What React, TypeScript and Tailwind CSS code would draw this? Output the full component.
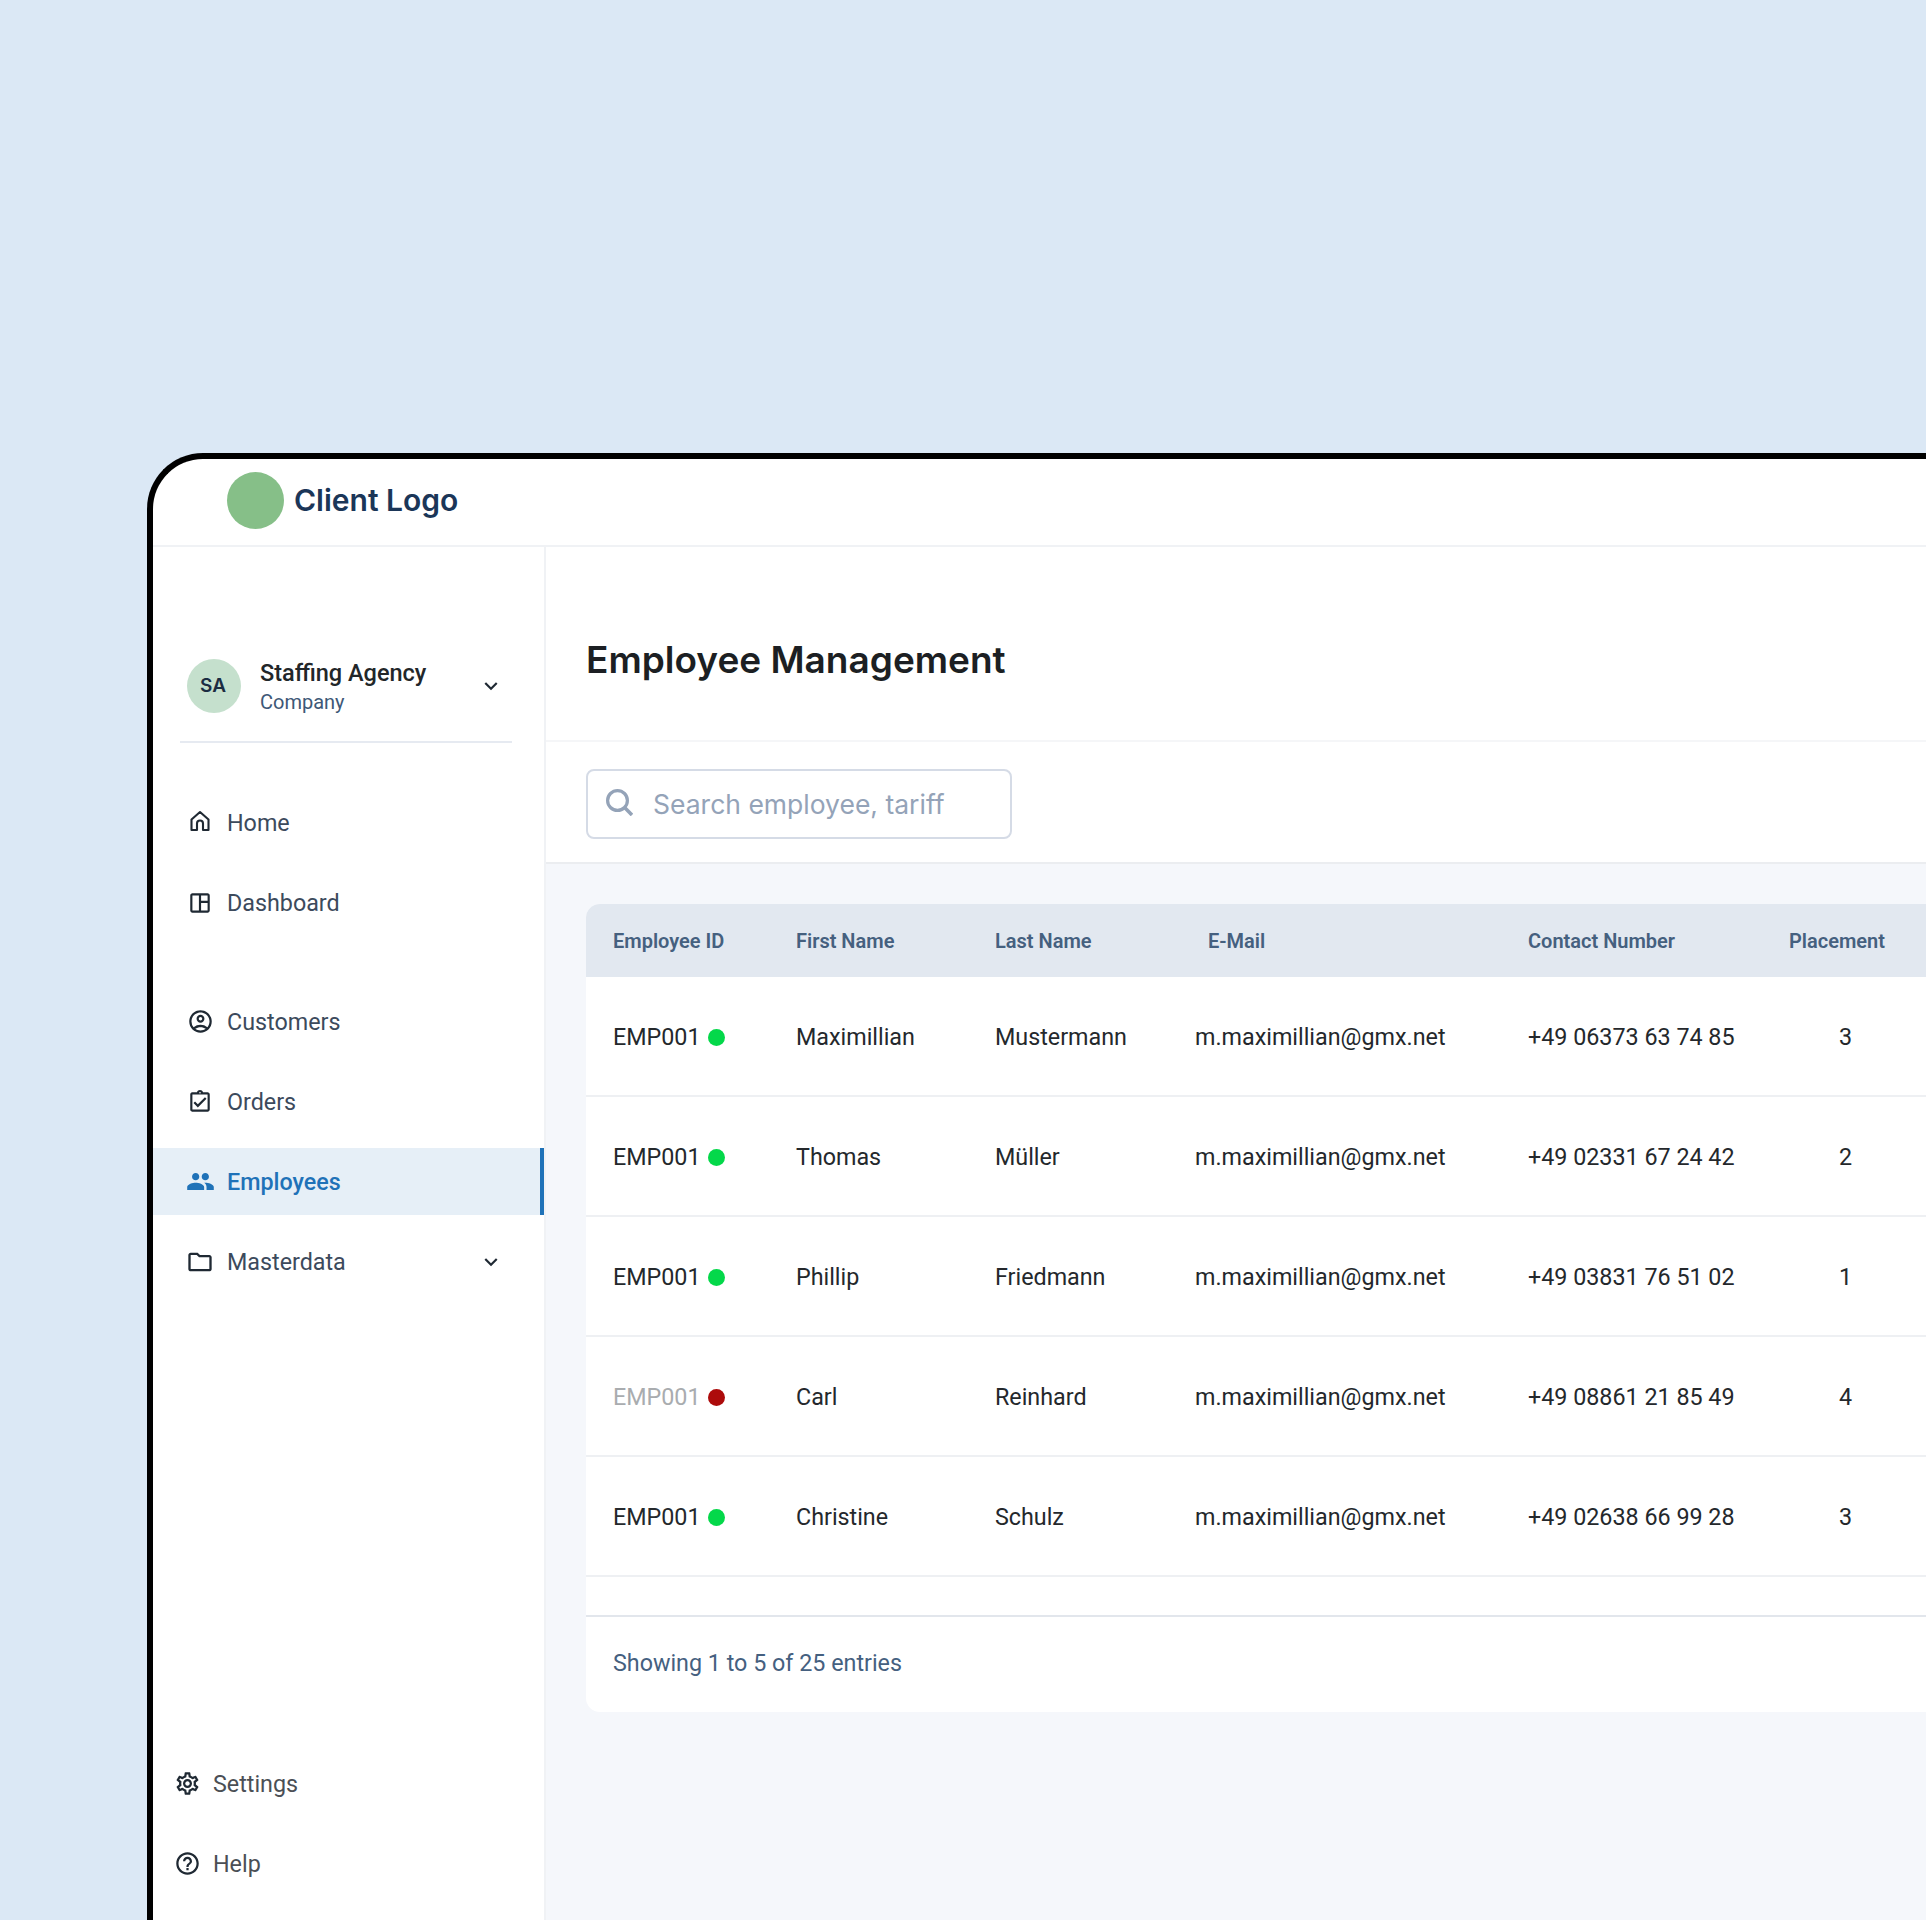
import type { ReactNode } from 'react'
import {
  MdGroup,
  MdHelpOutline,
  MdKeyboardArrowDown,
  MdOutlineAccountCircle,
  MdOutlineAssignmentTurnedIn,
  MdOutlineFolder,
  MdOutlineSettings,
  MdOutlineSpaceDashboard,
} from 'react-icons/md'

type Employee = {
  id: string
  first: string
  last: string
  phone: string
  placement: number
  active: boolean
}

const employees: Employee[] = [
  { id: 'EMP001', first: 'Maximillian', last: 'Mustermann', phone: '+49 06373 63 74 85', placement: 3, active: true },
  { id: 'EMP001', first: 'Thomas', last: 'Müller', phone: '+49 02331 67 24 42', placement: 2, active: true },
  { id: 'EMP001', first: 'Phillip', last: 'Friedmann', phone: '+49 03831 76 51 02', placement: 1, active: true },
  { id: 'EMP001', first: 'Carl', last: 'Reinhard', phone: '+49 08861 21 85 49', placement: 4, active: false },
  { id: 'EMP001', first: 'Christine', last: 'Schulz', phone: '+49 02638 66 99 28', placement: 3, active: true },
]

const gridCols = 'grid grid-cols-[183px_199px_200px_333px_261px_160px]'

function HomeIcon() {
  return (
    <svg viewBox="0 0 24 24" width="24" height="24" fill="none" stroke="#1f2933" strokeWidth="2.1" strokeLinejoin="round" className="mt-[-3px]">
      <path d="M3.5 10.5 12 3l8.5 7.5V21h-5.5v-6.5a3 3 0 0 0-6 0V21H3.5z" />
    </svg>
  )
}

function SearchIcon() {
  return (
    <svg viewBox="0 0 27 27" width="27" height="27" fill="none" stroke="#94a3b8" strokeWidth="3.2" className="mt-[-4px]">
      <circle cx="11.5" cy="11.5" r="9.9" />
      <path d="M18.6 18.6 26 26" strokeWidth="3.6" />
    </svg>
  )
}

function NavItem({ icon, label, active, chevron }: { icon: ReactNode; label: string; active?: boolean; chevron?: boolean }) {
  return (
    <div
      className={`flex h-[67px] items-center pl-[32px] pr-[42px] ${
        active ? 'border-r-4 border-[#1f72b8] bg-[#e6eff7] font-medium text-[#1f72b8]' : 'text-[#3c4a5c]'
      }`}
    >
      <span className={`flex w-[30px] justify-center ${active ? 'text-[#1f72b8]' : 'text-[#1f2933]'}`}>{icon}</span>
      <span className="ml-[12px] flex-1 pt-[1px] text-[23.3px]">{label}</span>
      {chevron && <MdKeyboardArrowDown size={26} className="mr-[-2px] text-[#1f2933]" />}
    </div>
  )
}

function FootItem({ icon, label }: { icon: ReactNode; label: string }) {
  return (
    <div className="flex h-[67px] items-center pl-[19px] text-[23.3px] text-[#4b4f55]">
      <span className="flex w-[30px] justify-center text-[#1f2933]">{icon}</span>
      <span className="ml-[11px] pt-[1px]">{label}</span>
    </div>
  )
}

export default function App() {
  return (
    <div className="h-[1920px] w-[1926px] overflow-hidden bg-[#dbe8f5] pl-[147px] pt-[453px] font-['Roboto',sans-serif]">
      <div className="flex h-[1600px] w-[2100px] flex-col rounded-tl-[56px] border-l-[6px] border-t-[6px] border-black bg-white">
        <header className="flex h-[88px] shrink-0 items-center border-b-2 border-[#f0f2f5] pb-[3px] pl-[74px]">
          <div className="size-[57px] rounded-full bg-[#86bf88]" />
          <span className="ml-[10px] font-['Inter',sans-serif] text-[30px] font-semibold text-[#1b3658]">Client Logo</span>
        </header>

        <div className="flex min-h-0 flex-1">
          <aside className="flex w-[393px] shrink-0 flex-col border-r-2 border-[#f0f2f5]">
            <div className="ml-[27px] mr-[32px] mt-[112px] flex h-[84px] items-start border-b-2 border-[#e6eaf1] pl-[7px] pr-[8px]">
              <div className="flex size-[54px] items-center justify-center rounded-full bg-[#c5e0cd] pr-[2px] font-['Inter',sans-serif] text-[19px] font-semibold text-[#1b2c42]">
                SA
              </div>
              <div className="ml-[19px] flex-1">
                <div className="text-[23.5px] font-medium leading-[28px] text-[#222629]">Staffing Agency</div>
                <div className="mt-[2px] text-[20px] leading-[26px] text-[#3e5877]">Company</div>
              </div>
              <MdKeyboardArrowDown size={26} className="mt-[14px] text-[#1f2933]" />
            </div>

            <nav className="mt-[46px] flex flex-col gap-[13px]">
              <NavItem icon={<HomeIcon />} label="Home" />
              <NavItem icon={<MdOutlineSpaceDashboard size={26} />} label="Dashboard" />
              <div className="h-[26px]" />
              <NavItem icon={<MdOutlineAccountCircle size={27} />} label="Customers" />
              <NavItem icon={<MdOutlineAssignmentTurnedIn size={26} />} label="Orders" />
              <NavItem icon={<MdGroup size={29} />} label="Employees" active />
              <NavItem icon={<MdOutlineFolder size={28} />} label="Masterdata" chevron />
            </nav>

            <div className="mt-[455px] flex flex-col gap-[13px]">
              <FootItem icon={<MdOutlineSettings size={27} />} label="Settings" />
              <FootItem icon={<MdHelpOutline size={27} />} label="Help" />
            </div>
          </aside>

          <main className="flex min-w-0 flex-1 flex-col bg-[#f5f7fb]">
            <div className="flex h-[195px] shrink-0 items-center border-b-2 border-[#f5f6f8] bg-white pl-[40px] pt-[32px]">
              <h1 className="font-['Inter',sans-serif] text-[37px] font-semibold text-[#1c1f23]">Employee Management</h1>
            </div>

            <div className="flex h-[122px] shrink-0 items-start justify-between border-b-2 border-[#ebedf0] bg-white pl-[40px] pr-[60px] pt-[27px]">
              <div className="flex h-[70px] w-[426px] items-center rounded-[8px] border-2 border-[#d5dbe6] pl-[18px]">
                <SearchIcon />
                <span className="ml-[20px] pt-[1px] font-['Inter',sans-serif] text-[26.5px] text-[#94a3b8]">Search employee, tariff</span>
              </div>
              <div className="flex h-[67px] items-center rounded-[10px] border-2 border-[#3e5d85] bg-white px-[25px] pt-[2px] font-['Inter',sans-serif] text-[26.5px] text-[#1b3658]">
                Edit Employee
              </div>
            </div>

            <div className="pl-[40px] pt-[40px]">
              <div className="rounded-[14px] bg-white">
                <div className={`${gridCols} h-[73px] items-center rounded-t-[14px] bg-[#e2e8f0] pl-[27px] text-[20px] font-semibold text-[#45607f]`}>
                  <span>Employee ID</span>
                  <span>First Name</span>
                  <span>Last Name</span>
                  <span className="pl-[13px]">E-Mail</span>
                  <span>Contact Number</span>
                  <span>Placement</span>
                </div>

                {employees.map((employee) => (
                  <div
                    key={employee.first}
                    className={`${gridCols} h-[120px] items-center border-b-2 border-[#eef0f3] pl-[27px] pt-[2px] text-[23.3px] text-[#24282c]`}
                  >
                    <span className="flex items-center">
                      <span className={employee.active ? '' : 'text-[#a9acaf]'}>{employee.id}</span>
                      <span className={`ml-[7px] size-[17px] rounded-full ${employee.active ? 'bg-[#04d84a]' : 'bg-[#ad0b0b]'}`} />
                    </span>
                    <span>{employee.first}</span>
                    <span>{employee.last}</span>
                    <span>m.maximillian@gmx.net</span>
                    <span>{employee.phone}</span>
                    <span className="pl-[50px]">{employee.placement}</span>
                  </div>
                ))}

                <div className="h-[40px] border-b-2 border-[#e2e6ec]" />
                <div className="flex h-[95px] items-center pb-[3px] pl-[27px] text-[23.3px] text-[#45607f]">Showing 1 to 5 of 25 entries</div>
              </div>
            </div>
          </main>
        </div>
      </div>
    </div>
  )
}
